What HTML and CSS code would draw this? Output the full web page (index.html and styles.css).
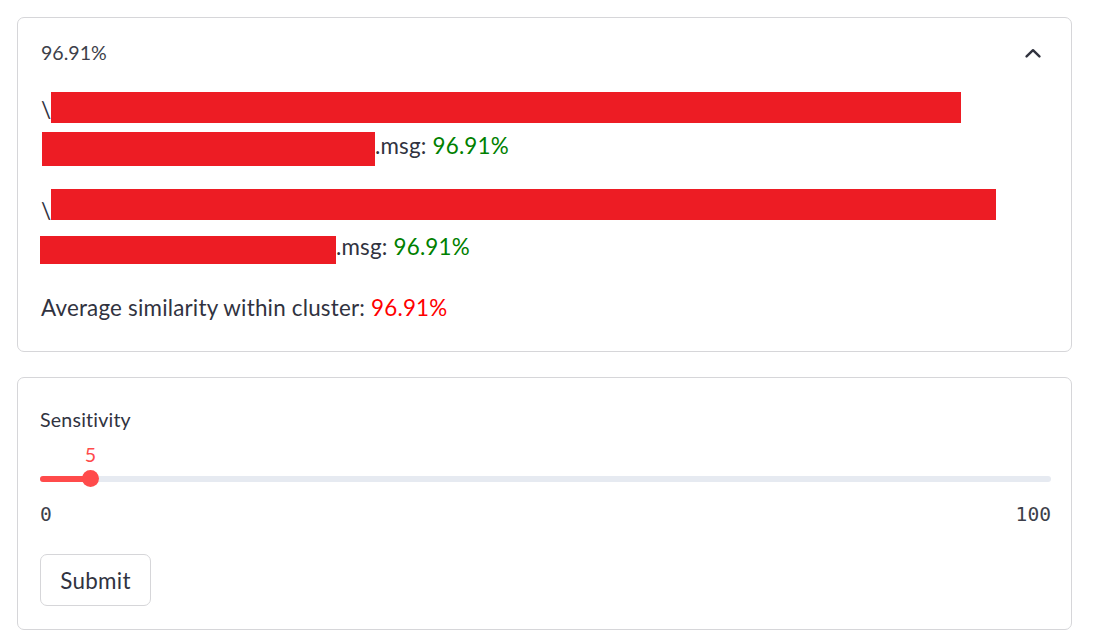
FILE: index.html
```html
<!DOCTYPE html>
<html lang="en">
<head>
<meta charset="utf-8">
<title>Cluster similarity</title>
<link rel="stylesheet" href="styles.css">
</head>
<body>
<div class="page">
  <section class="card expander">
    <div class="exp-header">
      <span class="exp-title">96.91%</span>
      <svg class="chev" width="16" height="10" viewBox="0 0 16 10" aria-hidden="true">
        <polyline points="1.6,8.4 8,2.2 14.4,8.4" fill="none" stroke="#31333f" stroke-width="2.4" stroke-linecap="round" stroke-linejoin="round"/>
      </svg>
    </div>
    <div class="exp-body">
      <div class="para">
        <div class="line"><span class="bs">\</span><span class="redact r1"></span></div>
        <div class="line"><span class="redact r2"></span><span>.msg: <span class="ok">96.91%</span></span></div>
      </div>
      <div class="para">
        <div class="line"><span class="bs">\</span><span class="redact r3"></span></div>
        <div class="line"><span class="redact r4"></span><span>.msg: <span class="ok">96.91%</span></span></div>
      </div>
      <p class="avg">Average similarity within cluster: <span class="bad">96.91%</span></p>
    </div>
  </section>

  <section class="card form">
    <div class="label">Sensitivity</div>
    <div class="slider">
      <div class="thumb-value-row">
        <span class="thumb-value" style="left: 5%">5</span>
      </div>
      <div class="track-row">
        <div class="track">
          <div class="track-fill" style="width: 5%"></div>
        </div>
        <span class="thumb" style="left: 5%"></span>
      </div>
      <div class="ticks">
        <span>0</span>
        <span>100</span>
      </div>
    </div>
    <button class="btn" type="button">Submit</button>
  </section>
</div>
</body>
</html>
```

FILE: styles.css
```css
* {
  box-sizing: border-box;
}

html, body {
  margin: 0;
  padding: 0;
  background: #ffffff;
}

body {
  font-family: Lato, "Liberation Sans", sans-serif;
  color: #31333f;
  width: 1093px;
  height: 641px;
  overflow: hidden;
}

.page {
  display: flex;
  flex-direction: column;
  gap: 25px;
  padding: 17px 21px 0 17px;
}

.card {
  border: 1px solid #d6d6d9;
  border-radius: 7px;
  background: #ffffff;
}

/* ---------- expander ---------- */
.exp-header {
  display: flex;
  align-items: center;
  justify-content: space-between;
  padding: 19px 30px 0 23px;
  height: 50px;
}

.exp-title {
  font-size: 19.6px;
  line-height: 31px;
  height: 31px;
  color: #3d3f4a;
}

.chev {
  display: block;
}

.exp-body {
  padding: 22px 0 27px 23px;
  font-size: 22.4px;
  letter-spacing: 0.2px;
}

.para + .para {
  margin-top: 29px;
}

.line {
  display: flex;
  align-items: flex-start;
  height: 36px;
  padding-top: 2px;
  line-height: 36px;
  white-space: nowrap;
}

.bs {
  display: inline-block;
  width: 10px;
  flex-shrink: 0;
}

.redact {
  display: block;
  flex-shrink: 0;
  background: #ed1c24;
}

.r1 { width: 910px; height: 31px; margin-top: 0; }
.r2 { width: 333px; height: 34px; margin-top: 4px; margin-left: 1px; }
.r3 { width: 945px; height: 31px; margin-top: -4px; }
.r4 { width: 296px; height: 28px; margin-top: 7px; margin-left: -1px; }

.ok {
  color: #008000;
}

.bad {
  color: #ff0000;
}

.avg {
  margin: 25px 0 0;
  padding-top: 2px;
  line-height: 36px;
  height: 36px;
}

/* ---------- form ---------- */
.form {
  padding: 25px 20px 23px 22px;
}

.label {
  font-size: 19.6px;
  line-height: 31px;
  height: 31px;
  padding-top: 1px;
  letter-spacing: 0.2px;
}

.slider {
  margin-top: 7px;
}

.thumb-value-row {
  position: relative;
  height: 24px;
}

.thumb-value {
  position: absolute;
  top: 2px;
  transform: translateX(-50%);
  font-size: 19.6px;
  line-height: 24px;
  color: #ff4b4b;
}

.track-row {
  position: relative;
  height: 17px;
  margin-top: 5px;
  display: flex;
  align-items: center;
}

.track {
  width: 100%;
  height: 6px;
  border-radius: 3px;
  background: #e6eaf1;
  overflow: hidden;
}

.track-fill {
  height: 100%;
  background: #ff4b4b;
}

.thumb {
  position: absolute;
  top: 0;
  width: 17px;
  height: 17px;
  margin-left: -8.5px;
  border-radius: 50%;
  background: #ff4b4b;
}

.ticks {
  display: flex;
  justify-content: space-between;
  margin-top: 14px;
  padding-top: 2px;
  height: 24px;
  line-height: 24px;
  font-family: "DejaVu Sans Mono", "Liberation Mono", monospace;
  font-size: 19.6px;
  color: #3d3f4a;
}

.btn {
  display: block;
  margin-top: 29px;
  width: 111px;
  height: 52px;
  padding: 0;
  border: 1px solid #d6d6d9;
  border-radius: 7px;
  background: #ffffff;
  font-family: Lato, "Liberation Sans", sans-serif;
  font-size: 22.4px;
  letter-spacing: 0.3px;
  color: #31333f;
  text-align: center;
}
```
